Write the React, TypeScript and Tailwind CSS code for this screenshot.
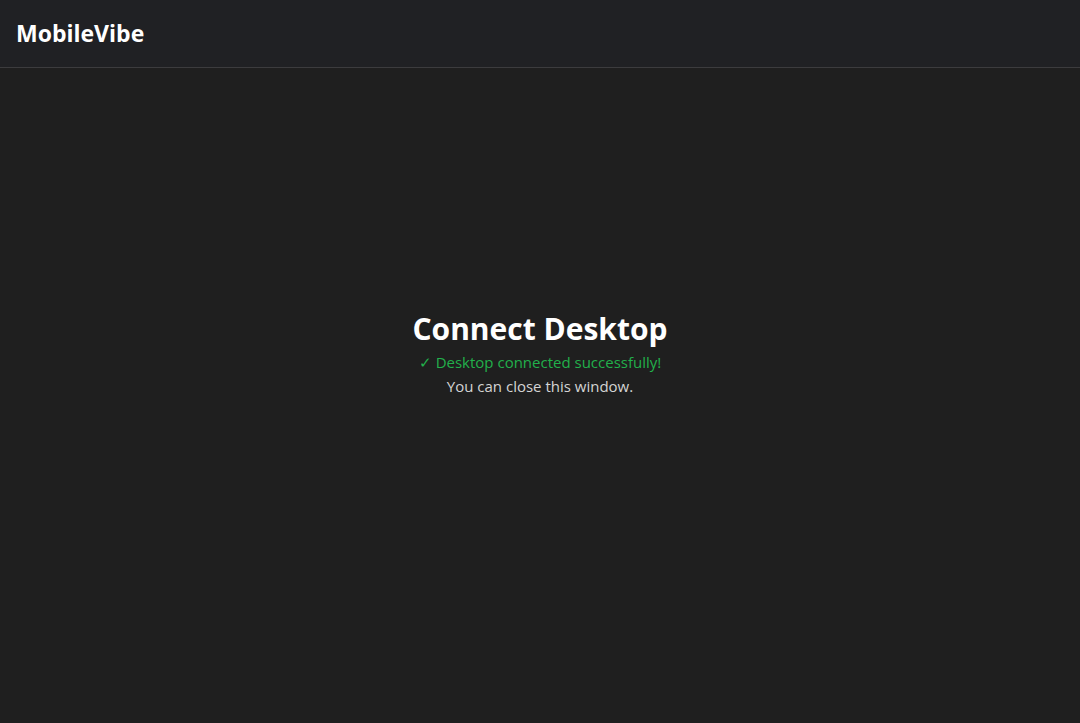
export default function App() {
  return (
    <div
      className="flex h-screen flex-col bg-[#1f1f1f] text-white"
      style={{ fontFamily: '"Open Sans", "Noto Sans", sans-serif' }}
    >
      <header className="flex h-[68px] shrink-0 items-center border-b border-[#3c3c3e] bg-[#202124] px-4">
        <h1 className="text-[23px] font-bold text-white">MobileVibe</h1>
      </header>

      <main className="flex flex-1 items-center justify-center pb-[84px]">
        <div className="flex flex-col items-center text-center">
          <h2 className="text-[30px] font-bold leading-[36px] text-white">Connect Desktop</h2>
          <p className="mt-[4px] text-[15px] leading-[22px] text-[#22b04b]">✓ Desktop connected successfully!</p>
          <p className="mt-[2px] text-[15px] leading-[22px] text-[#d4d4d4]">You can close this window.</p>
        </div>
      </main>
    </div>
  );
}
